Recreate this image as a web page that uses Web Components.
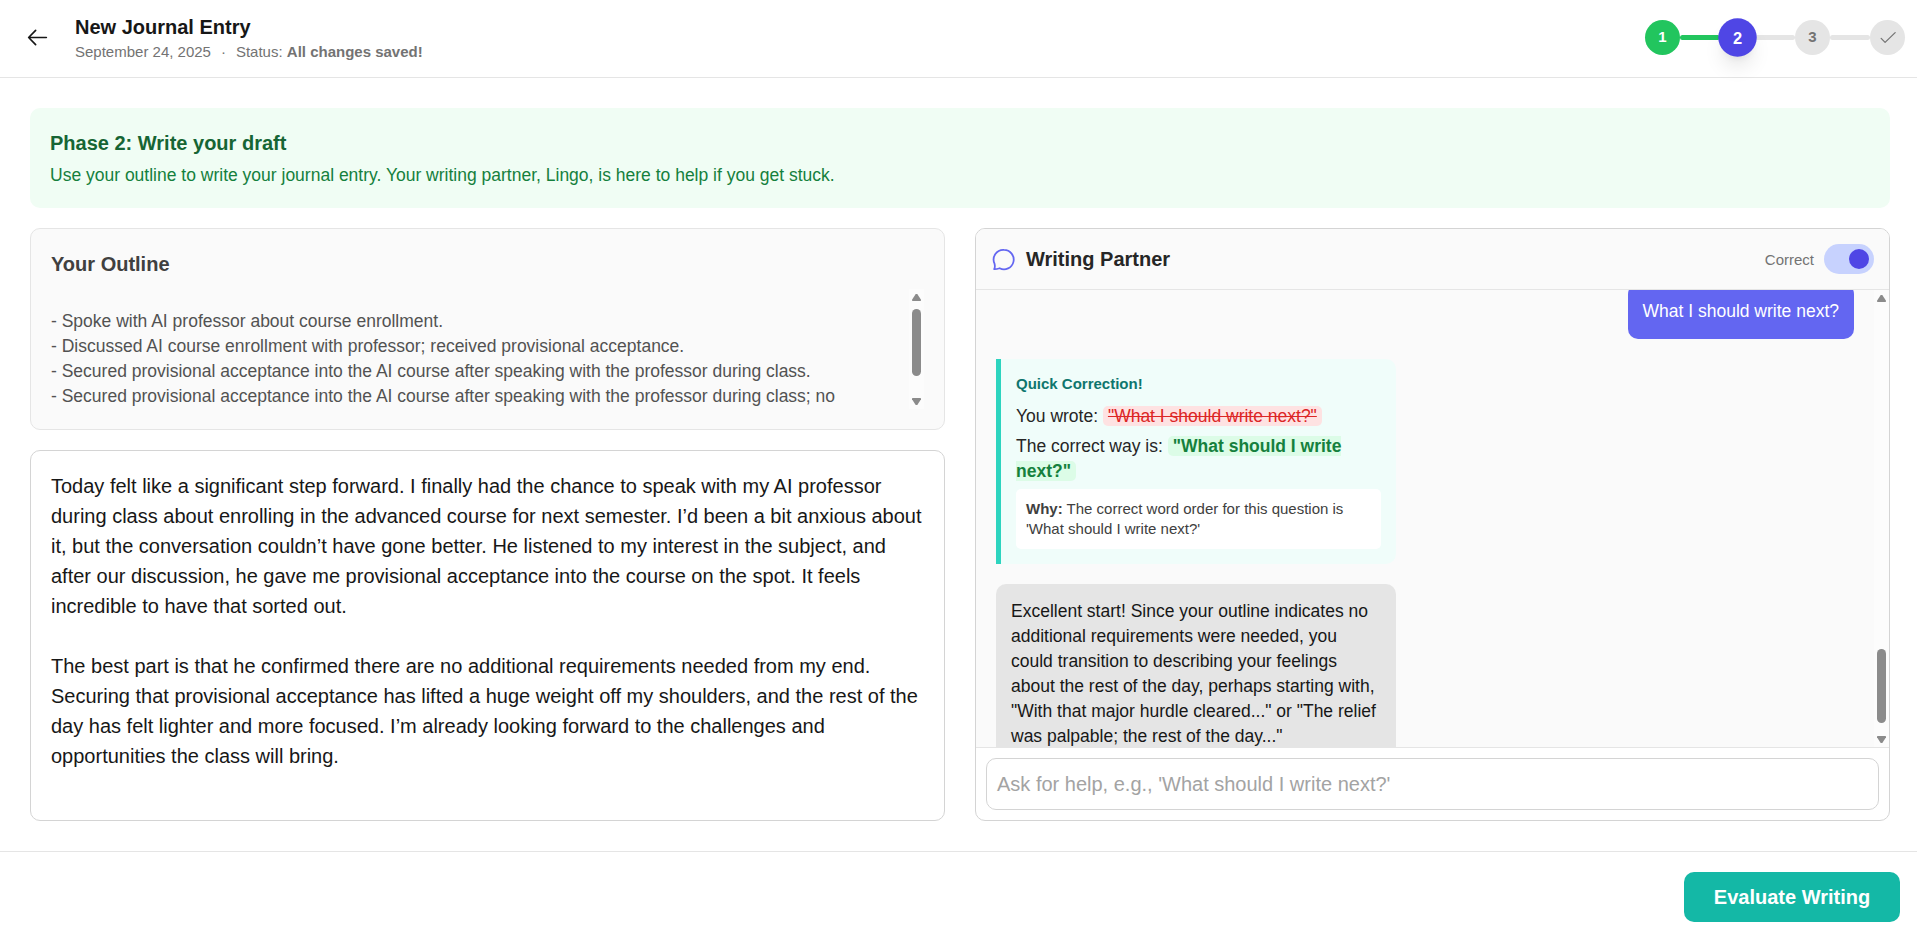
<!DOCTYPE html>
<html lang="en">
<head>
<meta charset="utf-8">
<title>New Journal Entry</title>
<style>
html,body{margin:0;height:100%;background:#fff}
body{font-family:"Liberation Sans",Arial,sans-serif;color:#171717;overflow:hidden}
</style>
</head>
<body>
<journal-page></journal-page>
<script>
const define = (name, html) => customElements.define(name, class extends HTMLElement {
  constructor() {
    super();
    const t = document.createElement('template');
    t.innerHTML = '<style>*{box-sizing:border-box}p,h1,h2,h3{margin:0}</style>' + html;
    this.attachShadow({mode: 'open'}).append(t.content.cloneNode(true));
  }
});

define('scroll-rail', `<style>
:host{display:flex;flex-direction:column;align-items:center;width:15px;background:#fcfcfc;box-sizing:border-box;padding:5px 0 4px;flex:none}
svg{display:block;width:9px;height:7px;flex:none}
i{display:block;width:9px;border-radius:4.5px;background:#8b8b8b;height:var(--thumb);margin-top:var(--offset);margin-bottom:auto}
</style>
<svg viewBox="0 0 9 7"><path d="M3.700 0H5.300L9 5.700V6.400L8.400 7H.6L0 6.400V5.700Z" fill="#8b8b8b"/></svg>
<i></i>
<svg viewBox="0 0 9 7"><path d="M3.700 7H5.300L9 1.300V.6L8.400 0H.6L0 .6V1.300Z" fill="#8b8b8b"/></svg>`);

define('step-dot', `<style>
:host{display:flex;align-items:center;justify-content:center;box-sizing:border-box;width:35px;height:35px;border-radius:50%;background:#e5e5e5;color:#737373;font:bold 15px/20px "Liberation Sans",Arial,sans-serif;flex:none;padding-bottom:1px}
:host([state=done]){background:#22c55e;color:#fff}
:host([state=active]){background:#4f46e5;color:#fff;transform:scale(1.1);box-shadow:0 12.5px 18.750px -3.750px rgba(0,0,0,.1),0 5px 7.500px -5px rgba(0,0,0,.1);z-index:1;padding:0}
</style><slot></slot>`);

define('phase-steps', `<style>
:host{display:flex;align-items:center}
i{width:40px;height:5px;border-radius:2.5px;background:#e5e5e5}
i.on{background:#22c55e}
svg{display:block;width:20px;height:20px}
</style>
<step-dot state="done">1</step-dot><i class="on"></i><step-dot state="active">2</step-dot><i></i><step-dot>3</step-dot><i></i>
<step-dot><svg viewBox="0 0 24 24" fill="none" stroke="#737373" stroke-width="1.5" stroke-linecap="round" stroke-linejoin="round"><path d="M3.800 13.600 8.500 18.400 20.600 6.700"/></svg></step-dot>`);

define('page-header', `<style>
:host{display:flex;align-items:center;box-sizing:border-box;height:78px;border-bottom:1px solid #e5e5e5;padding:0 12px 0 25px;flex:none}
svg{width:25px;height:25px;display:block;margin:-2px 25px 0 0}
h1{font-size:20px;line-height:25px;margin-top:1px}
p{font-size:15px;line-height:24px;color:#737373}
.t{flex:1;margin-top:1px}
.d{margin:0 10px}
phase-steps{margin-top:-2px}
</style>
<svg viewBox="0 0 24 24" fill="none" stroke="#171717" stroke-width="1.6" stroke-linecap="round" stroke-linejoin="round"><path d="M10.200 18.900 3.500 12l6.700-6.900M3.500 12h17"/></svg>
<div class="t"><h1>New Journal Entry</h1><p><span>September 24, 2025</span><span class="d">·</span><span>Status: <b>All changes saved!</b></span></p></div>
<phase-steps></phase-steps>`);

define('phase-banner', `<style>
:host{display:block;box-sizing:border-box;height:100px;padding:20px;border-radius:10px;background:#f0fdf4;flex:none}
h2{font-size:20px;line-height:30px;color:#166534}
p{font-size:17.5px;line-height:25px;margin-top:5px;color:#15803d}
</style>
<h2>Phase 2: Write your draft</h2>
<p>Use your outline to write your journal entry. Your writing partner, Lingo, is here to help if you get stuck.</p>`);

define('outline-card', `<style>
:host{display:flex;flex-direction:column;box-sizing:border-box;height:202px;padding:20px;border:1px solid #e5e5e5;border-radius:10px;background:#fafafa;flex:none}
h3{font-size:20px;line-height:30px;color:#404040}
.s{display:flex;height:120px;margin-top:10px;overflow:hidden;--thumb:67px;--offset:8px}
.c{flex:1;padding-top:20px;font-size:17.5px;line-height:25px;color:#525252}
</style>
<h3>Your Outline</h3>
<div class="s"><div class="c">
<p>- Spoke with AI professor about course enrollment.</p>
<p>- Discussed AI course enrollment with professor; received provisional acceptance.</p>
<p>- Secured provisional acceptance into the AI course after speaking with the professor during class.</p>
<p>- Secured provisional acceptance into the AI course after speaking with the professor during class; no</p>
</div><scroll-rail></scroll-rail></div>`);

define('draft-editor', `<style>
:host{display:block;box-sizing:border-box;flex:1;padding:20px;border:1px solid #d4d4d4;border-radius:10px;background:#fff;font-size:20px;line-height:30px;overflow:hidden}
p+p{margin-top:30px}
p{white-space:nowrap}
</style>
<p>Today felt like a significant step forward. I finally had the chance to speak with my AI professor<br>during class about enrolling in the advanced course for next semester. I’d been a bit anxious about<br>it, but the conversation couldn’t have gone better. He listened to my interest in the subject, and<br>after our discussion, he gave me provisional acceptance into the course on the spot. It feels<br>incredible to have that sorted out.</p>
<p>The best part is that he confirmed there are no additional requirements needed from my end.<br>Securing that provisional acceptance has lifted a huge weight off my shoulders, and the rest of the<br>day has felt lighter and more focused. I’m already looking forward to the challenges and<br>opportunities the class will bring.</p>`);

define('toggle-switch', `<style>
:host{display:flex;align-items:center;justify-content:flex-end;box-sizing:border-box;width:50px;height:30px;border-radius:15px;padding:5px;background:#c7d2fe}
i{width:20px;height:20px;border-radius:50%;background:#4f46e5}
</style><i></i>`);

define('chat-bubble', `<style>
:host{display:block;box-sizing:border-box;padding:15px;border-radius:10px;background:#e5e5e5;color:#171717;font-size:17.5px;line-height:25px;width:400px;flex:none;white-space:nowrap}
:host([mine]){background:#6366f1;color:#fff;align-self:flex-end;width:226px;padding-left:14.5px}
</style><slot></slot>`);

define('quick-correction', `<style>
:host{display:block;box-sizing:border-box;width:400px;height:205px;flex:none;padding:15px;border-left:5px solid #2dd4bf;border-radius:0 10px 10px 0;background:#f0fdfa;font-size:17.5px;line-height:25px;color:#262626;white-space:nowrap}
h3{font-size:15px;line-height:20px;color:#0f766e;margin-bottom:10px}
p+p{margin-top:5px}
span{padding:0 5px;border-radius:5px}
.bad{background:#fee2e2;color:#dc2626;text-decoration:line-through}
.good{background:#dcfce7;color:#15803d;font-weight:bold}
.why{margin-top:5px;background:#fff;border-radius:5px;padding:10px;font-size:15px;line-height:20px;color:#404040}
</style>
<h3>Quick Correction!</h3>
<p>You wrote: <span class="bad">"What I should write next?"</span></p>
<p>The correct way is: <span class="good">"What should I write<br>next?"</span></p>
<div class="why"><b>Why:</b> The correct word order for this question is<br>'What should I write next?'</div>`);

define('writing-partner', `<style>
:host{display:flex;flex-direction:column;box-sizing:border-box;border:1px solid #d4d4d4;border-radius:10px;background:#fff;overflow:hidden}
header{display:flex;align-items:center;height:61px;padding:0 15px;border-bottom:1px solid #e5e5e5;background:#fafafa;flex:none}
header svg{width:25px;height:25px;display:block;margin-right:10px}
h2{font-size:20px;line-height:30px;color:#262626;flex:1}
label{font-size:15px;color:#737373;margin-right:10px}
.body{flex:1;min-height:0;display:flex;background:#fafafa;overflow:hidden;--thumb:74px;--offset:347px}
.log{flex:1;display:flex;flex-direction:column;gap:20px;padding:0 20px;overflow:hidden}
chat-bubble[mine]{margin-top:-6px}
footer{height:73px;border-top:1px solid #e5e5e5;padding:10px;flex:none}
.in{height:52px;border:1px solid #d4d4d4;border-radius:10px;padding:0 10px;font-size:20px;line-height:50px;color:#a3a3a3}
</style>
<header><svg viewBox="0 0 24 24" fill="none" stroke="#6366f1" stroke-width="1.7" stroke-linejoin="round"><path d="M12.500 2.800a9.300 9.300 0 1 1-4.200 17.600c-1.500.5-3 1-5.300.9.900-1.600.9-3.300.4-5.300A9.300 9.300 0 0 1 12.500 2.800Z"/></svg><h2>Writing Partner</h2><label>Correct</label><toggle-switch></toggle-switch></header>
<div class="body"><div class="log">
<chat-bubble mine>What I should write next?</chat-bubble>
<quick-correction></quick-correction>
<chat-bubble>Excellent start! Since your outline indicates no<br>additional requirements were needed, you<br>could transition to describing your feelings<br>about the rest of the day, perhaps starting with,<br>"With that major hurdle cleared..." or "The relief<br>was palpable; the rest of the day..."</chat-bubble>
</div><scroll-rail></scroll-rail></div>
<footer><div class="in">Ask for help, e.g., 'What should I write next?'</div></footer>`);

define('page-footer', `<style>
:host{display:flex;justify-content:flex-end;box-sizing:border-box;height:87px;border-top:1px solid #e5e5e5;padding:20px 17px 0 0;flex:none}
button{width:216px;height:50px;border:0;padding:0;border-radius:10px;background:#14b8a6;color:#fff;font:bold 20px/30px "Liberation Sans",Arial,sans-serif}
</style><button>Evaluate Writing</button>`);

define('journal-page', `<style>
:host{display:flex;flex-direction:column;height:938px;width:1917px}
main{flex:1;min-height:0;display:flex;flex-direction:column;gap:20px;padding:30px 27px 30px 30px}
.g{flex:1;min-height:0;display:grid;grid-template-columns:1fr 1fr;gap:30px}
.l{display:flex;flex-direction:column;gap:20px;min-height:0}
</style>
<page-header></page-header>
<main><phase-banner></phase-banner>
<div class="g"><div class="l"><outline-card></outline-card><draft-editor></draft-editor></div><writing-partner></writing-partner></div></main>
<page-footer></page-footer>`);
</script>
</body>
</html>
